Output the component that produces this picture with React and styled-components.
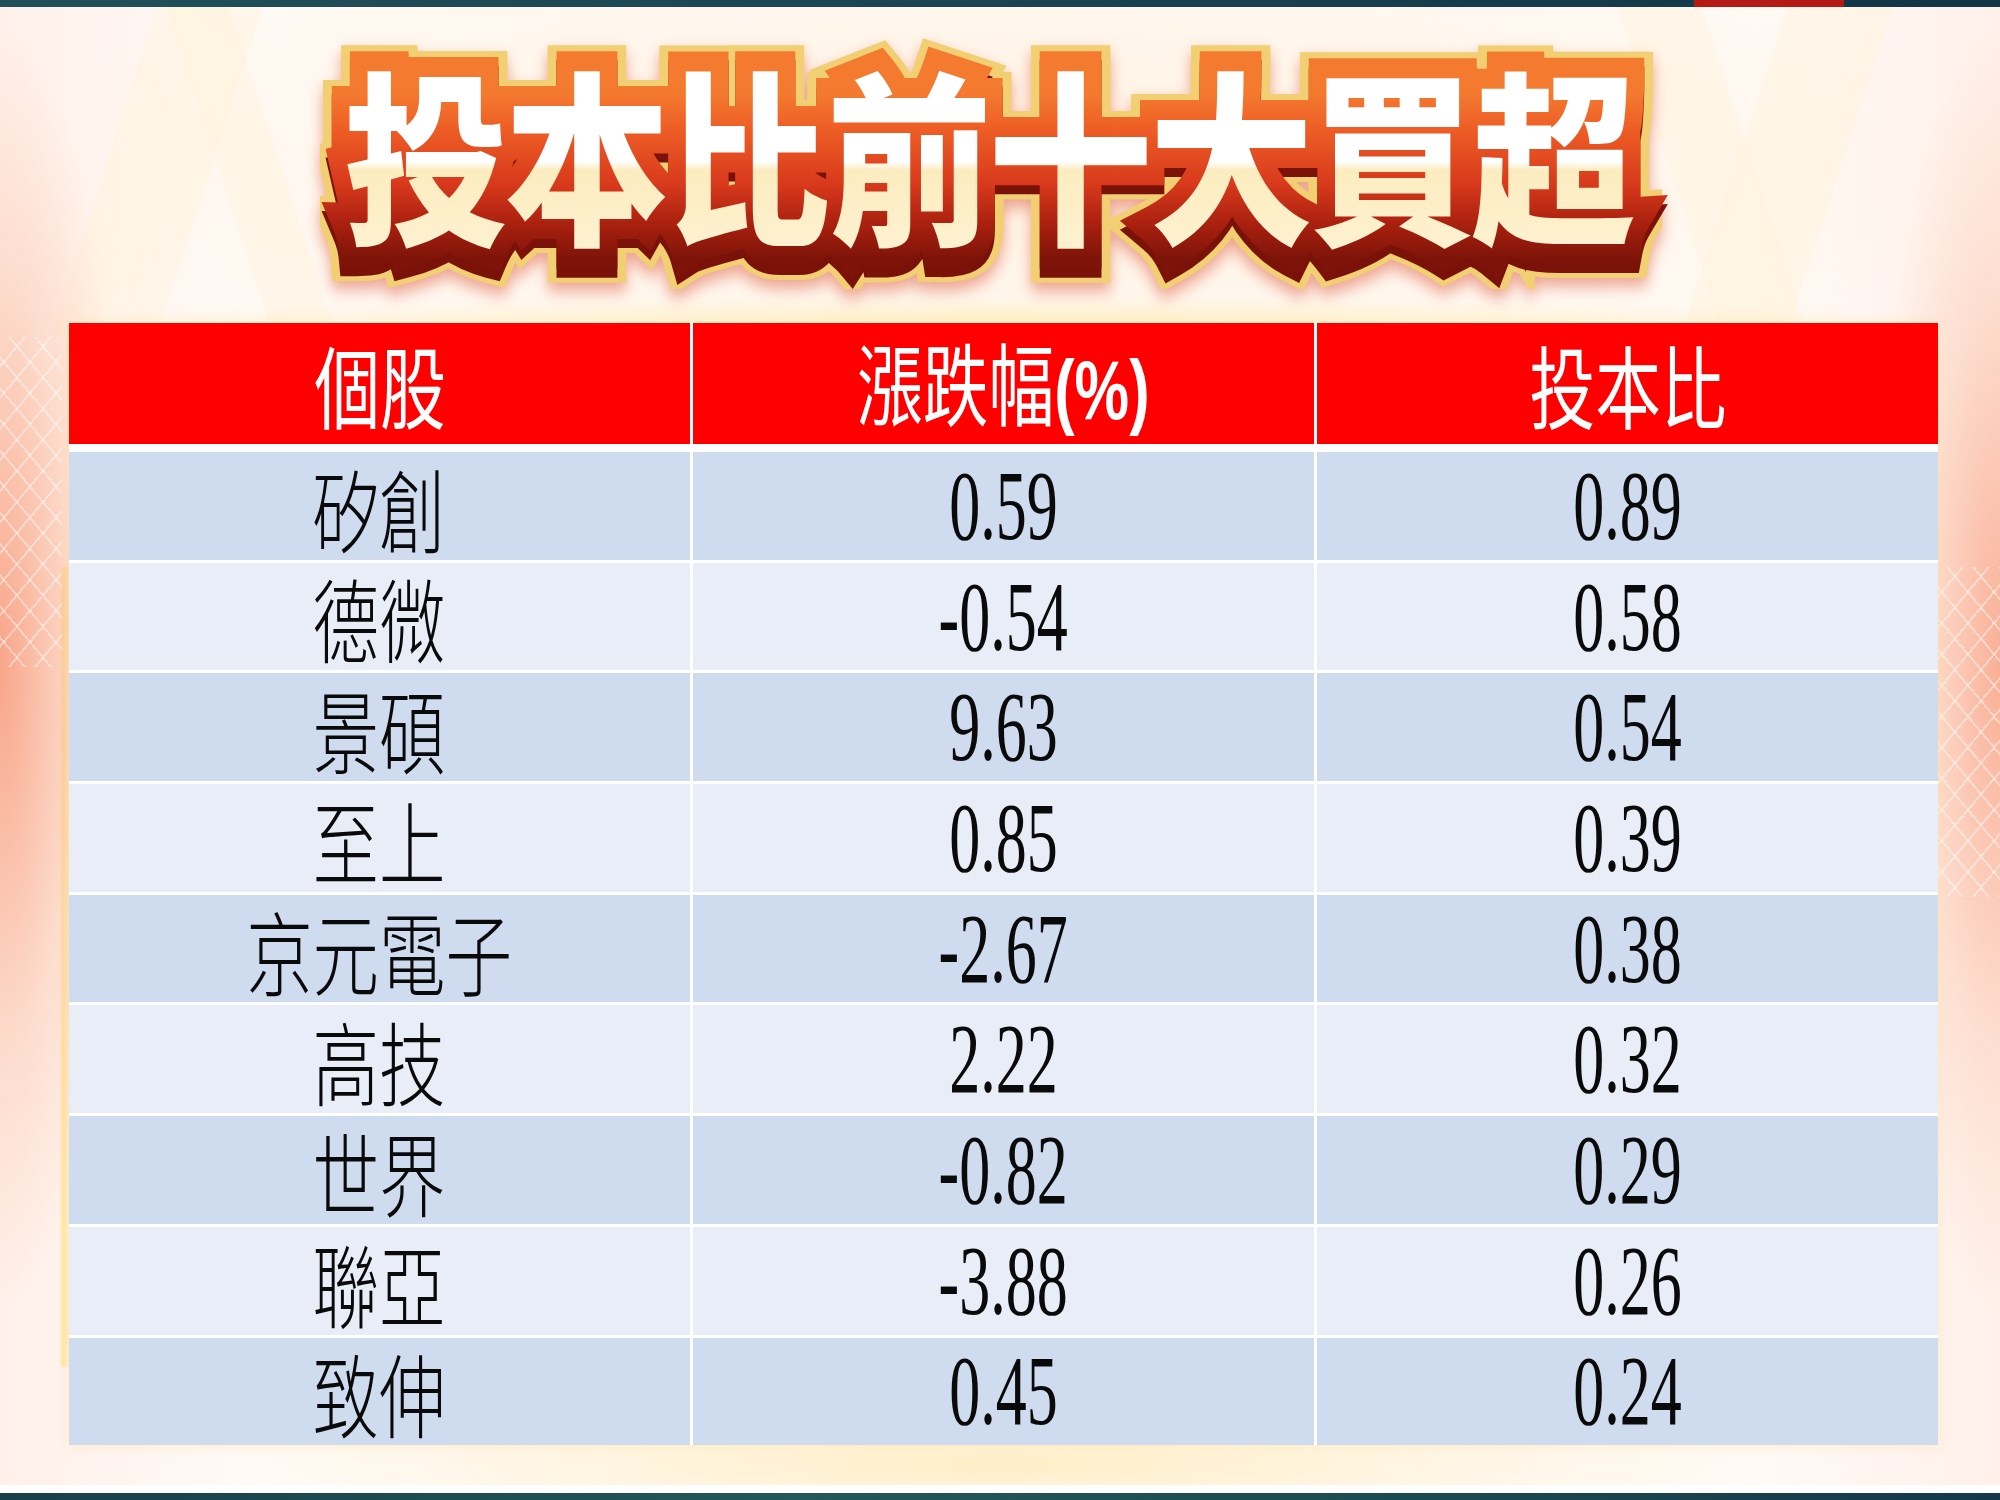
import React from 'react';
import styled, { createGlobalStyle } from 'styled-components';

const GlobalStyle = createGlobalStyle`
  html, body {
    margin: 0;
    padding: 0;
    background: #ffffff;
  }
  #root {
    width: 2000px;
    height: 1500px;
  }
`;

const rows = [
    { name: '矽創', change: '0.59', ratio: '0.89' },
    { name: '德微', change: '-0.54', ratio: '0.58' },
    { name: '景碩', change: '9.63', ratio: '0.54' },
    { name: '至上', change: '0.85', ratio: '0.39' },
    { name: '京元電子', change: '-2.67', ratio: '0.38' },
    { name: '高技', change: '2.22', ratio: '0.32' },
    { name: '世界', change: '-0.82', ratio: '0.29' },
    { name: '聯亞', change: '-3.88', ratio: '0.26' },
    { name: '致伸', change: '0.45', ratio: '0.24' },
];

const TITLE = '投本比前十大買超';

const App = () => {
    return (
        <Page>
            <GlobalStyle />
            <TopBar>
                <Accent />
            </TopBar>
            <Stage>
                <TitleWrap>
                    <TitleStack>
                        <TitleGold aria-hidden="true">{TITLE}</TitleGold>
                        <TitleDepth aria-hidden="true">{TITLE}</TitleDepth>
                        <TitleRim aria-hidden="true">{TITLE}</TitleRim>
                        <TitleFace>{TITLE}</TitleFace>
                    </TitleStack>
                </TitleWrap>
                <Table>
                    <HeaderRow>
                        <HeaderCell><HeadText>個股</HeadText></HeaderCell>
                        <HeaderCell><HeadText>漲跌幅<Paren>(%)</Paren></HeadText></HeaderCell>
                        <HeaderCell><HeadText>投本比</HeadText></HeaderCell>
                    </HeaderRow>
                    <Body>
                        {rows.map((r, i) => (
                            <React.Fragment key={r.name}>
                                <Cell $alt={i % 2 === 1}><NameText>{r.name}</NameText></Cell>
                                <Cell $alt={i % 2 === 1}><NumText>{r.change}</NumText></Cell>
                                <Cell $alt={i % 2 === 1}><NumText>{r.ratio}</NumText></Cell>
                            </React.Fragment>
                        ))}
                    </Body>
                </Table>
            </Stage>
            <BottomBar />
        </Page>
    );
};

export default App;

const Page = styled.div`
    width: 2000px;
    height: 1500px;
    display: flex;
    flex-direction: column;
    overflow: hidden;
`;

const TopBar = styled.div`
    height: 7px;
    flex-shrink: 0;
    display: flex;
    justify-content: flex-end;
    padding-right: 156px;
    background: linear-gradient(90deg, #21505a 0%, #1a4452 50%, #133546 100%);
`;

const Accent = styled.div`
    width: 150px;
    background: #b31a16;
`;

const BottomBar = styled.div`
    height: 7px;
    flex-shrink: 0;
    background: linear-gradient(90deg, #173f4a 0%, #23575a 40%, #1c4a52 70%, #143847 100%);
`;

const Stage = styled.div`
    flex: 1;
    display: flex;
    flex-direction: column;
    padding: 0 62px 0 69px;
    background-color: #fffaf5;
    background-image:
        linear-gradient(180deg, transparent calc(100% - 8px), #ffffff calc(100% - 8px)),
        radial-gradient(ellipse 760px 60px at 50% 1458px, rgba(255, 236, 190, 0.85), rgba(255, 240, 210, 0.35) 70%, transparent 100%),
        radial-gradient(ellipse 900px 22px at 50% 312px, rgba(255, 236, 170, 0.5), transparent 100%),
        repeating-linear-gradient(130deg, transparent 0 18px, rgba(255, 255, 255, 0.4) 18px 20px),
        repeating-linear-gradient(50deg, transparent 0 18px, rgba(255, 255, 255, 0.4) 18px 20px),
        repeating-linear-gradient(50deg, transparent 0 18px, rgba(255, 255, 255, 0.4) 18px 20px),
        repeating-linear-gradient(130deg, transparent 0 18px, rgba(255, 255, 255, 0.4) 18px 20px),
        radial-gradient(ellipse 130px 640px at 0 660px, rgba(246, 140, 104, 0.75), rgba(250, 186, 156, 0.38) 60%, transparent 100%),
        radial-gradient(ellipse 130px 640px at 100% 660px, rgba(246, 140, 104, 0.65), rgba(250, 186, 156, 0.32) 60%, transparent 100%),
        linear-gradient(90deg, transparent 59px, rgba(255, 222, 120, 0.6) 63px, rgba(255, 226, 140, 0.4) 68px, transparent 69px),
        linear-gradient(108deg, transparent 0 150px, rgba(255, 241, 214, 0.35) 150px 250px, transparent 250px 1700px, rgba(255, 241, 214, 0.35) 1700px 1800px, transparent 1800px),
        linear-gradient(72deg, transparent 0 260px, rgba(255, 238, 205, 0.25) 260px 320px, transparent 320px 1640px, rgba(255, 238, 205, 0.25) 1640px 1720px, transparent 1720px),
        radial-gradient(ellipse 1000px 280px at 50% 160px, #fff2e2, rgba(255, 244, 232, 0) 100%),
        linear-gradient(90deg, #fff0ea 0%, #fffaf5 12%, #fffaf5 88%, #fff0ea 100%);
    background-repeat: no-repeat;
    background-size:
        100% 100%,
        100% 100%,
        100% 100%,
        62px 330px,
        62px 330px,
        62px 330px,
        62px 330px,
        100% 100%,
        100% 100%,
        100% 800px,
        100% 330px,
        100% 330px,
        100% 100%,
        100% 100%;
    background-position:
        0 0,
        0 0,
        0 0,
        0 330px,
        0 330px,
        100% 560px,
        100% 560px,
        0 0,
        0 0,
        0 560px,
        0 0,
        0 0,
        0 0,
        0 0;
`;

const TitleWrap = styled.div`
    height: 316px;
    flex-shrink: 0;
    display: flex;
    align-items: center;
    justify-content: center;
    padding-bottom: 30px;
    box-sizing: border-box;
`;

const TitleStack = styled.div`
    display: grid;
    transform: scaleX(0.885);
    font-family: "Noto Sans CJK TC", "Noto Sans CJK SC", sans-serif;
    font-size: 186px;
    font-weight: 900;
    line-height: 1;
    letter-spacing: -4px;
    white-space: nowrap;
`;

const TitleLayer = styled.div`
    grid-area: 1 / 1;
    position: relative;
    padding: 50px 76px 50px 42px;
`;

const TitleGold = styled(TitleLayer)`
    color: #f2cf72;
    -webkit-text-stroke: 60px #f2cf72;
    transform: translateY(4px);
    filter: drop-shadow(0 8px 8px rgba(214, 60, 30, 0.45));
`;

const TitleDepth = styled(TitleLayer)`
    color: #7a1209;
    -webkit-text-stroke: 40px #7a1209;
    transform: translateY(9px);
`;

const TitleRim = styled(TitleLayer)`
    -webkit-text-stroke: 40px transparent;
    color: transparent;
    background: linear-gradient(180deg, #f47a30 0%, #f47a30 30%, #ee5f26 42%, #d8391c 62%, #a9200f 76%, #7e1409 88%);
    -webkit-background-clip: text;
    background-clip: text;
`;

const TitleFace = styled(TitleLayer)`
    color: transparent;
    background: linear-gradient(180deg, #ffffff 0%, #ffffff 54%, #fcecc0 57%, #fff4d8 100%);
    -webkit-background-clip: text;
    background-clip: text;
`;

const Table = styled.div`
    display: flex;
    flex-direction: column;
    gap: 8px;
    background: #ffffff;
    box-shadow: 0 0 10px rgba(255, 226, 150, 0.5);
`;

const HeaderRow = styled.div`
    display: grid;
    grid-template-columns: repeat(3, 1fr);
    column-gap: 3px;
    height: 121px;
`;

const HeaderCell = styled.div`
    background: #ff0000;
    display: flex;
    align-items: center;
    justify-content: center;
    color: #ffffff;
`;

const HeadText = styled.span`
    display: inline-block;
    font-family: "Noto Sans CJK TC", "Noto Sans CJK SC", sans-serif;
    font-size: 90px;
    font-weight: 400;
    line-height: 1.1;
    transform: scaleX(0.73);
    white-space: nowrap;
`;

const Paren = styled.span`
    font-family: "Liberation Sans", Arial, sans-serif;
    font-weight: 700;
    font-size: 84px;
`;

const Body = styled.div`
    display: grid;
    grid-template-columns: repeat(3, 1fr);
    grid-auto-rows: 107.7px;
    gap: 3px;
`;

const Cell = styled.div`
    background: ${p => (p.$alt ? '#e8edf7' : '#cfdbee')};
    display: flex;
    align-items: center;
    justify-content: center;
    color: #0a0a0a;
`;

const NameText = styled.span`
    display: inline-block;
    font-family: "Noto Sans CJK TC", "Noto Sans CJK SC", sans-serif;
    font-size: 91px;
    font-weight: 300;
    line-height: 1.1;
    transform: scaleX(0.73);
    white-space: nowrap;
`;

const NumText = styled.span`
    display: inline-block;
    font-family: "Liberation Serif", "Times New Roman", serif;
    font-size: 100px;
    line-height: 1;
    transform: scaleX(0.62);
    white-space: nowrap;
`;
